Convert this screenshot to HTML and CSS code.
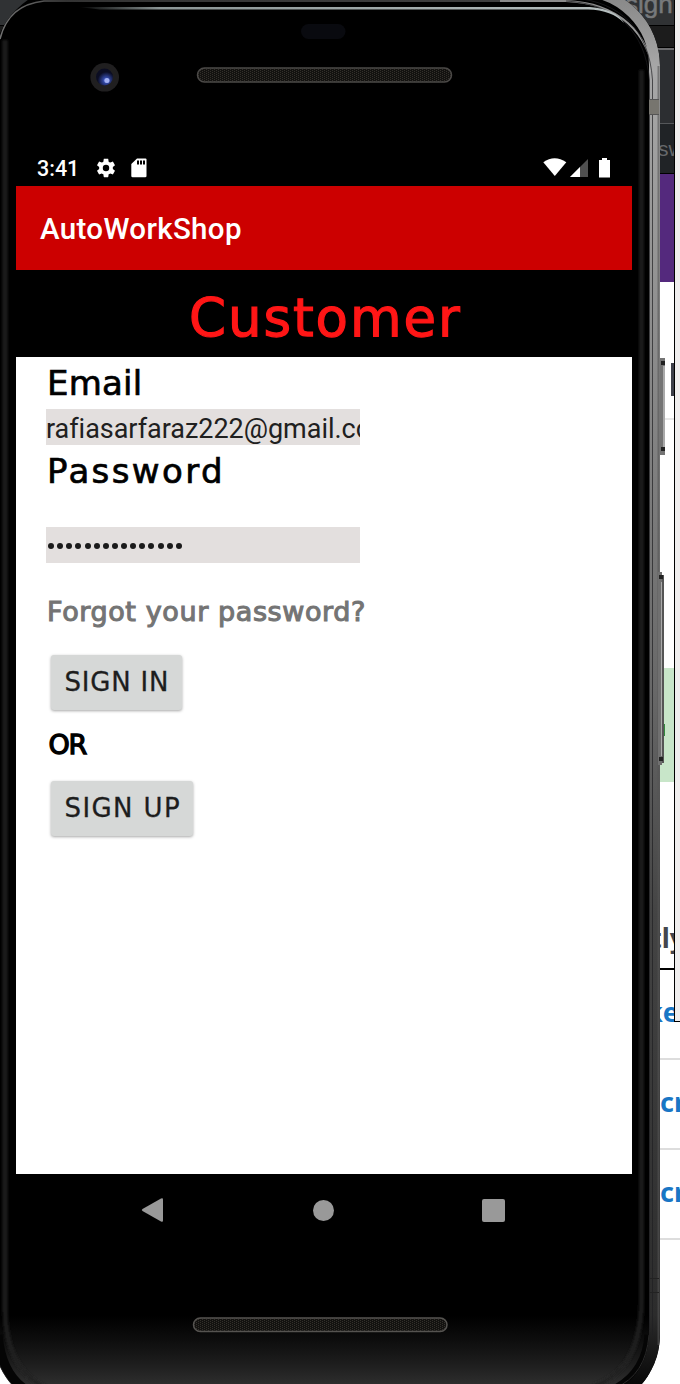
FILE: index.html
```html
<!DOCTYPE html>
<html lang="en">
<head>
<meta charset="utf-8">
<title>AutoWorkShop</title>
<link rel="stylesheet" href="styles.css">
</head>
<body>
<div class="desktop">
  <div class="browser">
    <div class="tabs">sign</div>
    <div class="toolbar"></div>
    <div class="address"></div>
    <div class="bookmarks">sw</div>
    <div class="banner"></div>
    <div class="panel"><span class="mark"></span></div>
    <div class="notice"></div>
    <div class="row heading">tly</div>
    <div class="row link ke">ke</div>
    <div class="row link">cr</div>
    <div class="row link">cr</div>
  </div>
  <div class="side-window"></div>

  <div class="phone">
    <svg class="bezel" width="680" height="1384" viewBox="0 0 680 1384">
      <defs>
        <linearGradient id="metal" gradientUnits="userSpaceOnUse" x1="0" y1="0" x2="0" y2="1384">
          <stop offset="0" stop-color="#8a8a8a"/><stop offset=".05" stop-color="#a8a8a8"/><stop offset=".25" stop-color="#8c8c8c"/>
          <stop offset=".5" stop-color="#686868"/><stop offset=".66" stop-color="#444"/><stop offset=".95" stop-color="#2c2c2c"/><stop offset="1" stop-color="#080808"/>
        </linearGradient>
        <linearGradient id="edge" gradientUnits="userSpaceOnUse" x1="0" y1="0" x2="659" y2="0">
          <stop offset="0" stop-color="#707070"/><stop offset=".1" stop-color="#444"/><stop offset=".8" stop-color="#555"/><stop offset=".93" stop-color="#aaa"/><stop offset="1" stop-color="#999"/>
        </linearGradient>
        <linearGradient id="fade" x1="0" y1="0" x2="0" y2="1">
          <stop offset="0" stop-color="#222" stop-opacity="0"/><stop offset="1" stop-color="#303030"/>
        </linearGradient>
        <linearGradient id="shine" gradientUnits="userSpaceOnUse" x1="78" y1="0" x2="625" y2="0">
          <stop offset="0" stop-color="#8b9595" stop-opacity="0"/><stop offset=".15" stop-color="#8b9595"/><stop offset="1" stop-color="#b7c0c0"/>
        </linearGradient>
        <radialGradient id="lens" cx=".6" cy=".7"><stop offset="0" stop-color="#8ea4ff"/><stop offset=".35" stop-color="#3045a0"/><stop offset="1" stop-color="#0b0d22"/></radialGradient>
        <pattern id="mesh" width="4" height="2" patternUnits="userSpaceOnUse"><rect width="4" height="2" fill="#131210"/><path d="M0 0h1v1H0zM2 1h1v1H2z" fill="#33302b"/></pattern>
        <filter id="soft" filterUnits="userSpaceOnUse" x="-20" y="-20" width="720" height="1440"><feGaussianBlur stdDeviation="1.500"/></filter>
        <clipPath id="shape"><path d="M-7 66A80 80 0 0 1 73 -14H580A80 80 0 0 1 660 66V1335A75 75 0 0 1 585 1410H68A75 75 0 0 1 -7 1335Z"/></clipPath>
      </defs>
      <g clip-path="url(#shape)">
        <rect x="-7" y="-14" width="667" height="1424" fill="#000"/>
        <rect x="0" y="1315" width="650" height="72" fill="url(#fade)"/>
        <path d="M5 40V1310Q6 1372 50 1390M641.500 70V1300Q641 1370 594 1386" fill="none" stroke="#212121" stroke-width="4" filter="url(#soft)"/>
        <path d="M-2 1335Q2 1378 30 1392M649 1335Q646 1378 605 1394" fill="none" stroke="#050505" stroke-width="9"/>
        <path d="M649 1335Q646 1375 615 1388" fill="none" stroke="#2a2a2a"/>
        <path d="M0 39Q8 5 44 1H566" fill="none" stroke="url(#edge)" stroke-width="1.500"/>
        <path d="M500 1H566C618 3 650 32 654.500 80V1348" fill="none" stroke="url(#metal)" stroke-width="2"/>
        <path d="M575 -9H580A74.500 74.500 0 0 1 654.500 66V1335A72 72 0 0 1 620 1396" fill="none" stroke="url(#metal)" stroke-width="11"/>
        <path d="M566 1C616 4 645 30 649.500 80V1330M574 -2C620 2 649 29 652.500 80V1335" fill="none" stroke="#202022" stroke-opacity=".7"/>
        <path d="M658.500 66V1345" stroke="#555" stroke-opacity=".6" stroke-width="2"/>
        <rect x="649" y="99" width="10" height="16" fill="#77756f"/><path d="M649 99.500h10M649 114.500h10" stroke="#555"/>
        <path d="M649 1278.500h10M649 1292.500h10" stroke="#222"/>
      </g>
      <path d="M78 7H590Q616 9 624 23Q612 10 588 9.500H100Z" fill="url(#shine)"/>
      <rect x="660" y="358" width="5" height="97" fill="#747474"/><rect x="663" y="366" width="2" height="82" fill="#aaa"/><path d="M661 363h4M661 449h4" stroke="#222" stroke-width="4"/>
      <rect x="658" y="572" width="4" height="193" fill="#707070"/><rect x="662" y="575" width="2" height="188" fill="#555"/><rect x="661" y="582" width="1" height="174" fill="#aaa"/><path d="M659 577h4M659 759h4" stroke="#222" stroke-width="4"/>
      <rect x="301" y="24" width="44.500" height="15" rx="7.500" fill="#090a0f"/>
      <circle cx="104.700" cy="77.300" r="14.300" fill="#201f20"/><circle cx="104.500" cy="77" r="8.500" fill="url(#lens)"/><circle cx="107" cy="80.500" r="2.500" fill="#a3b2f5"/>
      <rect x="197.500" y="68" width="254" height="14" rx="7" fill="url(#mesh)" stroke="#4b4947" stroke-width="1.500"/>
      <rect x="193.500" y="1318" width="253.500" height="13.500" rx="6.750" fill="url(#mesh)" stroke="#555350" stroke-width="1.500"/>
    </svg>

    <div class="screen">
      <div class="status">
        <span class="clock">3:41</span>
        <svg class="gear" width="22" height="22" viewBox="0 0 24 24"><path fill="#fff" fill-rule="evenodd" d="M19.430 12.980c.04-.32.07-.64.07-.98s-.03-.66-.07-.98l2.110-1.650c.19-.15.24-.42.12-.64l-2-3.460c-.12-.22-.39-.3-.61-.22l-2.490 1c-.52-.4-1.080-.73-1.690-.98l-.38-2.650C14.460 2.180 14.250 2 14 2h-4c-.25 0-.46.18-.49.42l-.38 2.650c-.61.25-1.170.59-1.690.98l-2.490-1c-.23-.09-.49 0-.61.22l-2 3.460c-.13.22-.07.49.12.64l2.110 1.650c-.04.32-.07.65-.07.98s.03.66.07.98l-2.110 1.650c-.19.15-.24.42-.12.64l2 3.460c.12.22.39.3.61.22l2.490-1c.52.4 1.080.73 1.690.98l.38 2.650c.03.24.24.42.49.42h4c.25 0 .46-.18.49-.42l.38-2.650c.61-.25 1.170-.59 1.690-.98l2.490 1c.23.09.49 0 .61-.22l2-3.460c.12-.22.07-.49-.12-.64zM12 15.500a3.500 3.500 0 1 1 0-7a3.500 3.500 0 0 1 0 7z"/></svg>
        <svg class="card" width="16" height="20" viewBox="0 0 16 20"><path d="M6 .5H14.500Q15.500 .5 15.500 1.500V18Q15.500 19.300 14.200 19.300H1.700Q.3 19.300 .3 18V6Z" fill="#fff"/><path d="M6 2.500h2v4H6zM9 2.500h2v4H9zM12 2.500h2v4h-2z" fill="#000"/></svg>
        <svg class="signals" width="70" height="22" viewBox="0 0 70 22"><path d="M.3 5.200Q11.500-2.800 23.300 5.200L11.800 19Z" fill="#fff"/><path d="M27 20L45 2V20Z" fill="#505050"/><path d="M27 20L37 10V20Z" fill="#fff"/><path d="M59 1h5v2h3v17.500H56V3h3z" fill="#fff"/></svg>
      </div>
      <div class="appbar">AutoWorkShop</div>
      <div class="title"><span>Customer</span></div>
      <div class="form">
        <div class="label email">Email</div>
        <div class="field">rafiasarfaraz222@gmail.com</div>
        <div class="label password">Password</div>
        <div class="field dots"><i></i><i></i><i></i><i></i><i></i><i></i><i></i><i></i><i></i><i></i><i></i><i></i><i></i><i></i><i></i></div>
        <div class="forgot">Forgot your password?</div>
        <div class="button signin">SIGN IN</div>
        <div class="or">OR</div>
        <div class="button signup">SIGN UP</div>
      </div>
      <div class="nav">
        <svg width="24" height="26" viewBox="0 0 24 26"><path d="M1.500 12L20 1.500Q22 .5 22 2.500V23.500Q22 25.500 20 24.500L1.500 14Q0 13 1.500 12Z" fill="#999"/></svg>
        <span class="home"></span>
        <span class="recent"></span>
      </div>
    </div>
  </div>
</div>
</body>
</html>
```

FILE: styles.css
```css
* { box-sizing: border-box; }
body { margin: 0; background: #fff; font-family: Roboto, "Liberation Sans", sans-serif; }
.desktop { position: relative; width: 680px; height: 1384px; overflow: hidden; }

/* Browser page visible around the handset */
.browser { display: flex; flex-direction: column; }
.browser > div { flex: none; }
.tabs { height: 26px; padding-left: 625px; background: #303234; border-bottom: 1px solid #000; color: #77797b; font: 26px/8px "Liberation Sans", sans-serif; -webkit-text-stroke: .5px #77797b; }
.toolbar { height: 22px; background: #1c1c1c; border-bottom: 1px solid #000; }
.address { height: 76px; background: #2c2e31; border-top: 2px solid #6c6c6e; border-bottom: 1px solid #55575a; }
.bookmarks { height: 50px; padding-left: 658px; background: #202326; border-bottom: 1px solid #000; color: #66686a; font: 21px/49px "Liberation Sans", sans-serif; }
.banner { height: 108px; background: #54297d; }
.panel { height: 386px; padding: 81px 0 0 671px; background: linear-gradient(#e8e8e8, #e8e8e8) 0 136px / 100% 2px no-repeat; }
.mark { display: block; width: 4px; height: 33px; background: #3d3f49; }
.notice { height: 114px; background: linear-gradient(#338a3e, #338a3e) 664px 56px / 1px 12px no-repeat #c8e6c9; }
.row { height: 90px; padding-left: 660px; border-bottom: 2px solid #ddd; font: bold 27px/84px "Noto Sans", sans-serif; }
.heading { height: 188px; padding: 112px 0 0 650px; border-color: #000; color: #44464d; line-height: 87px; }
.link { color: #1976c5; }
.ke { padding-left: 646px; }
.side-window { position: absolute; left: 674px; top: 0; width: 7px; height: 1022px; background: #f0eeee; border-left: 1px solid #000; border-bottom: 1px solid #000; }

/* Handset */
.phone { position: absolute; inset: 0; padding: 150px 48px 0 16px; }
.bezel { position: absolute; left: 0; top: 0; }
.screen { position: relative; display: flex; flex-direction: column; width: 616px; }
.status { display: flex; height: 36px; padding-left: 21px; background: #000; color: #fff; }
.clock { width: 41px; font-size: 21.500px; font-weight: 500; line-height: 38px; white-space: nowrap; }
.gear { margin: 7px 0 0 16.500px; }
.card { margin: 8px 0 0 14px; }
.signals { margin: 7px 19px 0 auto; }
.appbar { height: 84px; padding-left: 24px; background: #c00; color: #fff; font-size: 29.500px; font-weight: 500; line-height: 87px; letter-spacing: .35px; }
.title { height: 87px; padding-left: 173px; background: #000; color: #ff1616; font: 53px/95px "DejaVu Sans", sans-serif; letter-spacing: 1.900px; -webkit-text-stroke: 1.200px #ff1616; }
.form { display: flex; flex-direction: column; align-items: flex-start; height: 817px; padding-left: 30px; background: #fff; font-family: "DejaVu Sans", sans-serif; color: #000; }
.label { height: 52px; padding-left: 1px; font-size: 34px; line-height: 52px; white-space: nowrap; letter-spacing: .2px; -webkit-text-stroke: .7px #000; }
.password { height: 82px; letter-spacing: 2.400px; }
.field { width: 314px; height: 36px; background: #e3dfde; color: #202020; font: 27px/40px Roboto, sans-serif; letter-spacing: -.03px; white-space: nowrap; overflow: hidden; }
.dots { display: flex; align-items: center; gap: 3.130px; padding: 1px 0 0 2px; }
.dots i { width: 6px; height: 6px; border-radius: 50%; background: #1b1b1b; }
.forgot { height: 92px; padding-left: 1px; color: #747474; font-size: 27px; line-height: 97px; letter-spacing: .6px; white-space: nowrap; -webkit-text-stroke: 1.100px #747474; }
.button { height: 55px; margin-left: 5px; padding-left: 13.500px; border-radius: 3px; background: #d6d8d7; color: #1d1d1d; box-shadow: 0 1px 3px rgba(0, 0, 0, .35); font-size: 26px; line-height: 54px; letter-spacing: .8px; white-space: nowrap; -webkit-text-stroke: .3px #1d1d1d; }
.signin { width: 131px; }
.signup { width: 142px; letter-spacing: 1.400px; }
.or { height: 71px; padding-left: 2.500px; font-size: 27px; line-height: 69px; letter-spacing: -1.200px; -webkit-text-stroke: 1.300px #000; }
.nav { display: flex; align-items: center; height: 72px; padding-left: 125px; background: #000; }
.home { width: 21px; height: 21px; margin-left: 148px; border-radius: 50%; background: #999; }
.recent { width: 23px; height: 23px; margin-left: 148px; border-radius: 2px; background: #999; }
```
